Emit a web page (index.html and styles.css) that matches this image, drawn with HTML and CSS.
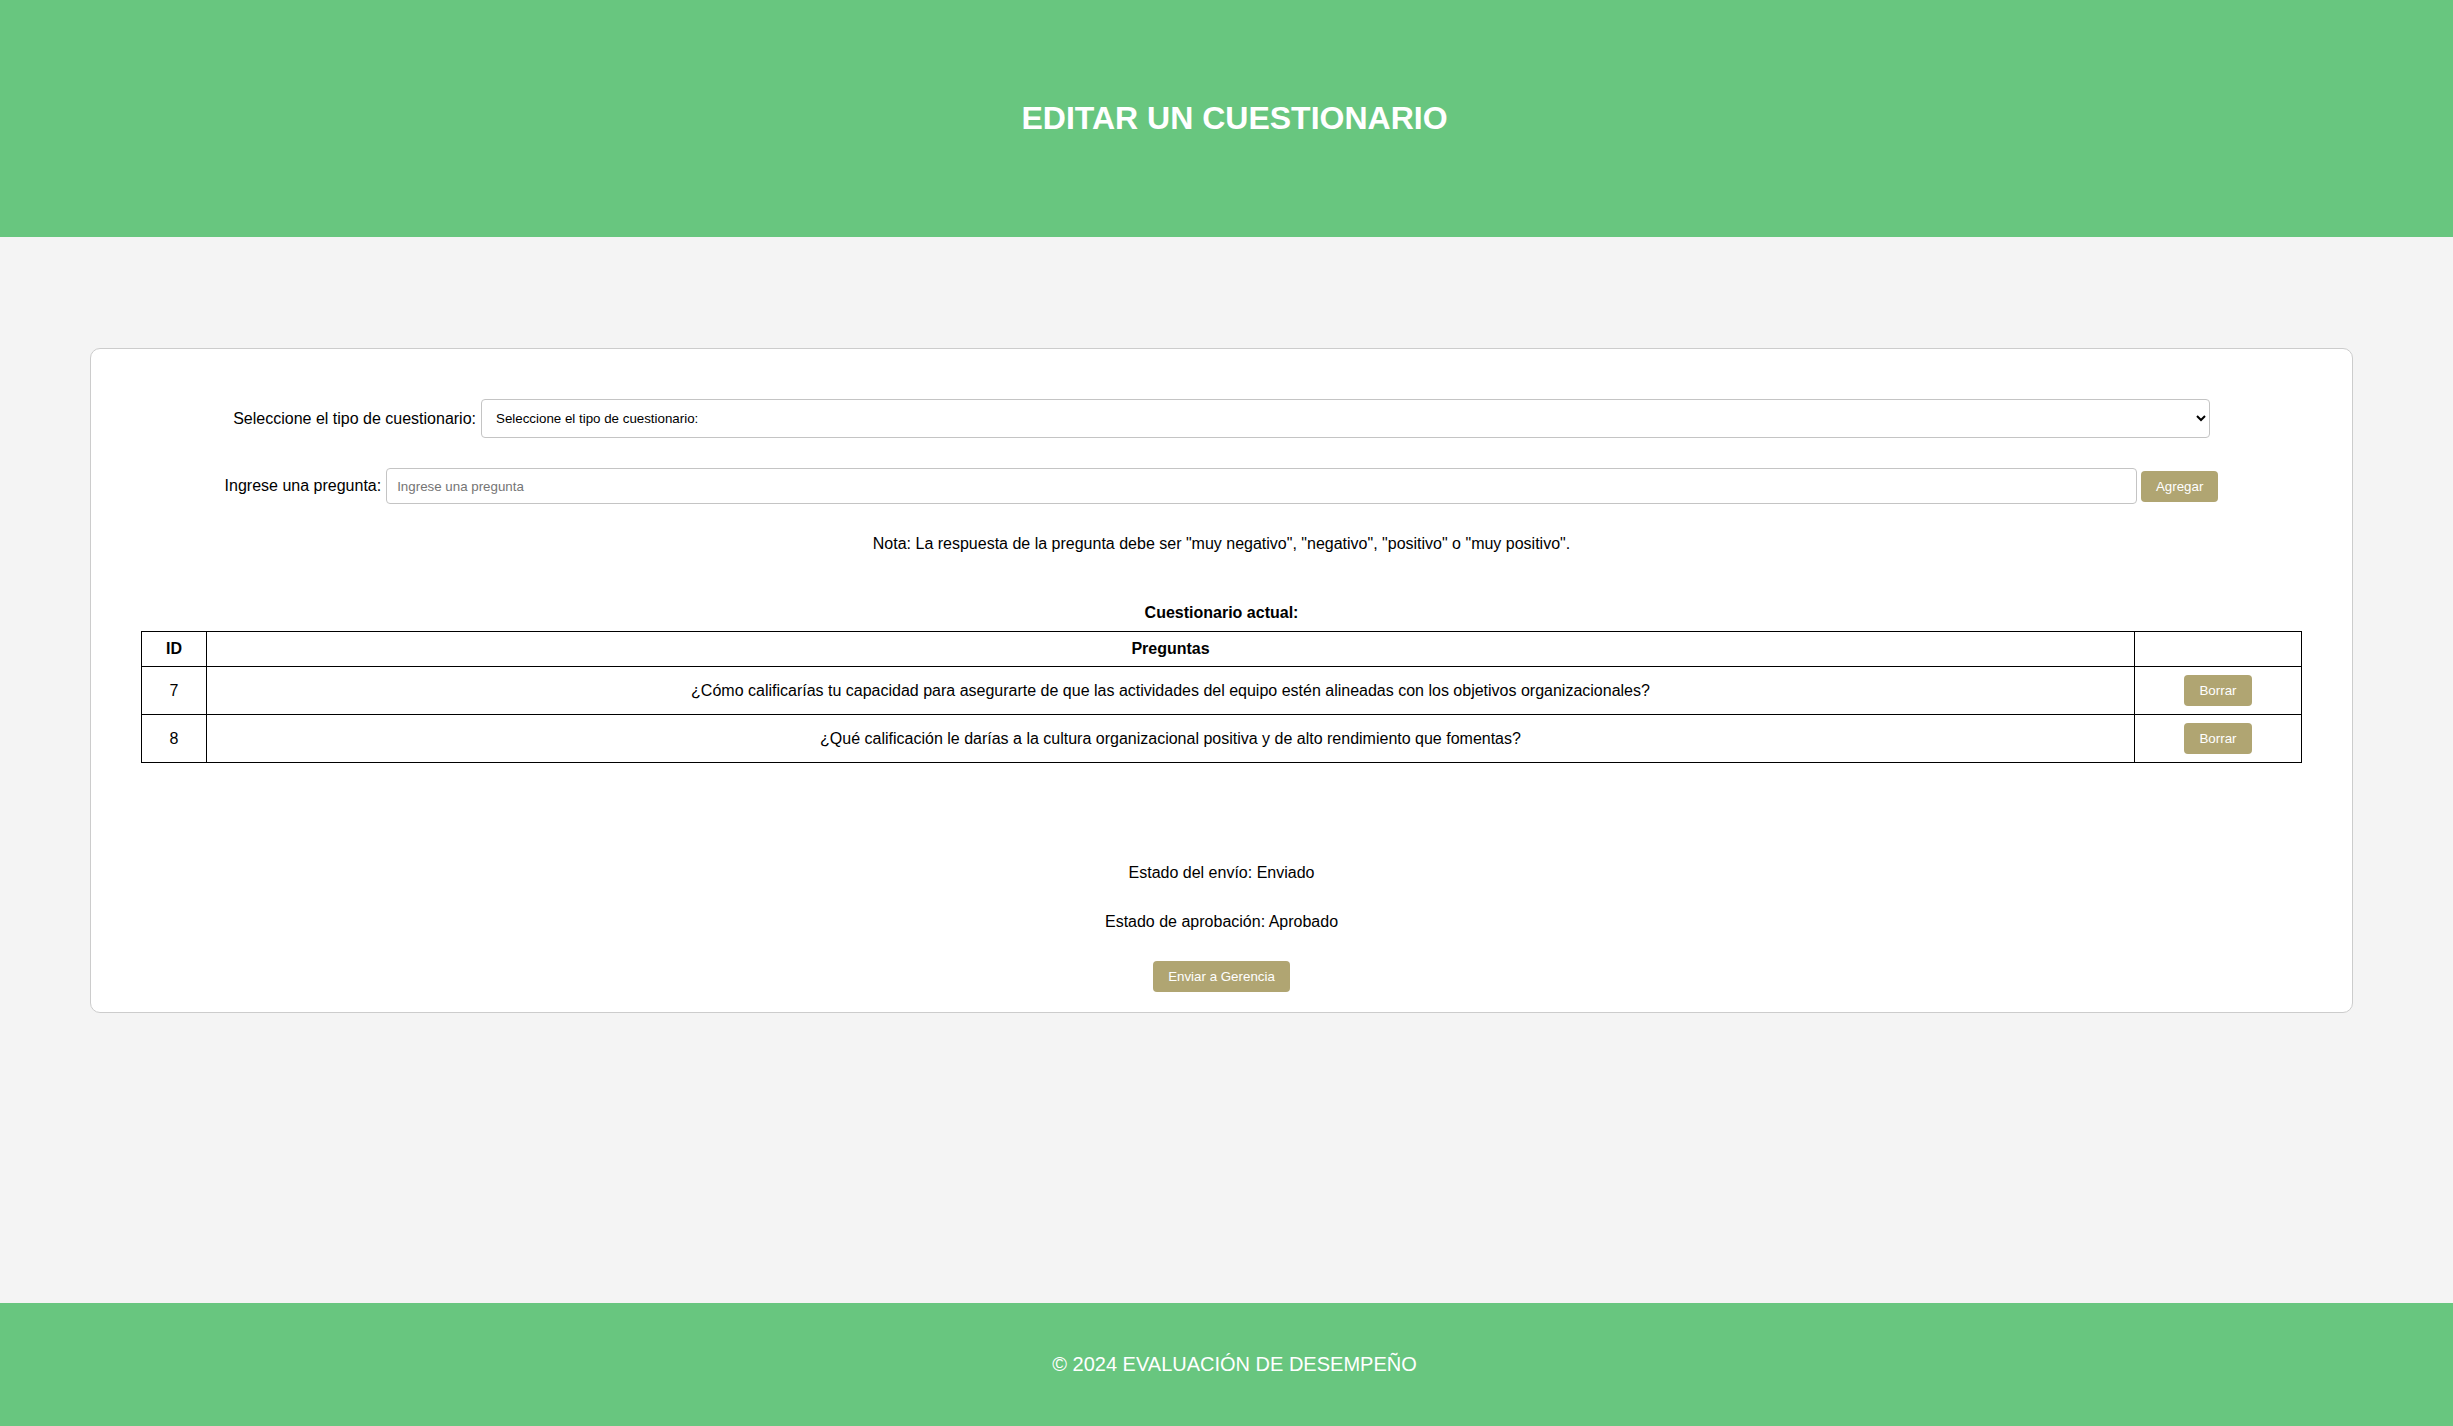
FILE: index.html
```html
<!DOCTYPE html>
<html lang="es">
<head>
<meta charset="utf-8">
<title>Editar un cuestionario</title>
<link rel="stylesheet" href="styles.css">
</head>
<body>
<header class="site-header">
  <h1>EDITAR UN CUESTIONARIO</h1>
</header>
<main class="main">
  <section class="card">
    <div class="form-row">
      <label class="form-label" for="tipo">Seleccione el tipo de cuestionario:</label>
      <select id="tipo" class="form-select">
        <option>Seleccione el tipo de cuestionario:</option>
      </select>
    </div>
    <div class="form-row form-row-gap">
      <label class="form-label" for="pregunta">Ingrese una pregunta:</label>
      <input id="pregunta" class="form-input" type="text" placeholder="Ingrese una pregunta">
      <button class="btn" type="button">Agregar</button>
    </div>
    <p class="note">Nota: La respuesta de la pregunta debe ser "muy negativo", "negativo", "positivo" o "muy positivo".</p>
    <h3 class="section-title">Cuestionario actual:</h3>
    <table class="q-table">
      <colgroup>
        <col class="col-id">
        <col>
        <col class="col-action">
      </colgroup>
      <thead>
        <tr><th>ID</th><th>Preguntas</th><th></th></tr>
      </thead>
      <tbody>
        <tr>
          <td>7</td>
          <td>¿Cómo calificarías tu capacidad para asegurarte de que las actividades del equipo estén alineadas con los objetivos organizacionales?</td>
          <td><button class="btn" type="button">Borrar</button></td>
        </tr>
        <tr>
          <td>8</td>
          <td>¿Qué calificación le darías a la cultura organizacional positiva y de alto rendimiento que fomentas?</td>
          <td><button class="btn" type="button">Borrar</button></td>
        </tr>
      </tbody>
    </table>
    <div class="status">
      <p class="status-line">Estado del envío: Enviado</p>
      <p class="status-line status-line-2">Estado de aprobación: Aprobado</p>
      <button class="btn btn-send" type="button">Enviar a Gerencia</button>
    </div>
  </section>
</main>
<footer class="site-footer">
  <p class="footer-text">© 2024 EVALUACIÓN DE DESEMPEÑO</p>
</footer>
</body>
</html>
```
FILE: styles.css
```css
* { box-sizing: border-box; }

body {
  margin: 0;
  min-height: 100vh;
  display: flex;
  flex-direction: column;
  background: #f4f4f4;
  color: #000;
  font-family: "Liberation Sans", Arial, sans-serif;
  font-size: 16px;
}

.site-header {
  background: #68c67f;
  color: #fff;
  text-align: center;
  padding: 100px 0 100px 16px;
}

.site-header h1 {
  margin: 0;
  font-size: 32px;
  line-height: 37px;
  font-weight: bold;
}

.main {
  flex: 1;
  padding: 111px 100px 0 90px;
}

.card {
  background: #fff;
  border: 1px solid #cccccc;
  border-radius: 10px;
  padding: 50px 50px 20px;
}

.form-row {
  display: flex;
  justify-content: center;
  align-items: center;
  gap: 4px;
}

.form-row-gap { margin-top: 30px; }

.form-label {
  font-size: 16px;
  line-height: 18px;
  margin-right: 1px;
}

.form-select {
  width: 80%;
  height: 39px;
  padding: 0 6px 0 10px;
  border: 1px solid #c4c4c4;
  border-radius: 4px;
  background: #fff;
  color: #000;
  font-family: "Liberation Sans", Arial, sans-serif;
  font-size: 13.33px;
}

.form-input {
  box-sizing: content-box;
  width: 80%;
  height: 34px;
  padding: 0 10px;
  border: 1px solid #c4c4c4;
  border-radius: 4px;
  font-family: "Liberation Sans", Arial, sans-serif;
  font-size: 13.33px;
  color: #000;
}

.form-input::placeholder { color: #757575; }

.btn {
  display: inline-block;
  border: none;
  border-radius: 4px;
  background: #b0a572;
  color: #fff;
  font-family: "Liberation Sans", Arial, sans-serif;
  font-size: 13.33px;
  line-height: 15px;
  padding: 8px 15px;
  cursor: pointer;
}

.note {
  margin: 31px 0 0;
  text-align: center;
  line-height: 18px;
}

.section-title {
  margin: 50px 0 9px;
  text-align: center;
  font-size: 16px;
  line-height: 19px;
  font-weight: bold;
}

.q-table {
  width: 100%;
  border-collapse: collapse;
  table-layout: fixed;
}

.col-id { width: 65px; }
.col-action { width: 167px; }

.q-table th,
.q-table td {
  border: 1px solid #000;
  padding: 8px;
  text-align: center;
  line-height: 18px;
  vertical-align: middle;
}

.q-table th { font-weight: bold; }

.status {
  margin-top: 101px;
  text-align: center;
}

.status-line {
  margin: 0;
  line-height: 18px;
}

.status-line-2 { margin-top: 31px; }

.btn-send { margin-top: 30px; }

.site-footer {
  background: #68c67f;
  color: #fff;
  text-align: center;
  padding: 50px 0 50px 16px;
}

.footer-text {
  margin: 0;
  font-size: 20px;
  line-height: 23px;
}
```
